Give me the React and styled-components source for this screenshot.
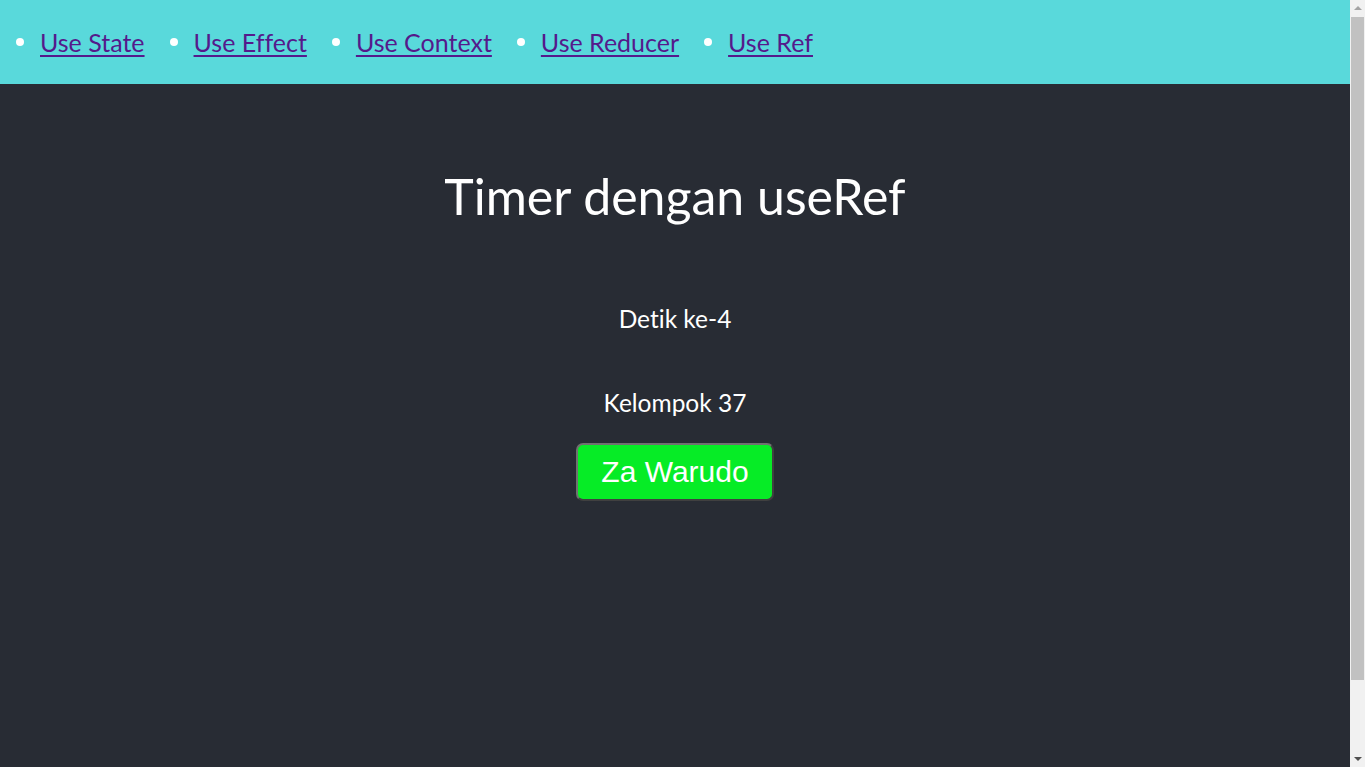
import React from "react";
import styled, { createGlobalStyle } from "styled-components";

const Global = createGlobalStyle`
  html, body { margin: 0; padding: 0; }
  body {
    font-family: Lato, "Noto Sans", sans-serif;
    font-variant-ligatures: none;
    background: #282c34;
  }
`;

const Page = styled.div`
  margin-right: 15px;
`;

const Nav = styled.nav`
  background: #59d9db;
  height: 84px;
  display: flex;
  align-items: center;
`;

const NavList = styled.ul`
  list-style: none;
  margin: 0;
  padding: 0 0 0 16px;
  display: flex;
  align-items: center;
  gap: 25px;
`;

const NavItem = styled.li`
  display: flex;
  align-items: center;
  gap: 16px;
  font-size: 25px;
  &::before {
    content: "";
    width: 8px;
    height: 8px;
    border-radius: 50%;
    background: #ffffff;
  }
`;

const NavLink = styled.a`
  color: #551a8b;
  text-decoration: underline;
  text-underline-offset: 3px;
  text-decoration-thickness: 2px;
`;

const Main = styled.main`
  min-height: 100vh;
  background: #282c34;
  color: #ffffff;
  display: flex;
  flex-direction: column;
  align-items: center;
  box-sizing: border-box;
  padding-top: 78px;
`;

const Title = styled.h1`
  margin: 0;
  font-weight: 400;
  font-size: 50px;
  line-height: 68px;
`;

const Text = styled.p`
  margin: ${(p) => p.$top}px 0 0;
  font-size: 24.5px;
  line-height: 32px;
`;

const Button = styled.button`
  margin-top: 24px;
  width: 198px;
  height: 58px;
  background: #06ec26;
  color: #ffffff;
  font-family: "Liberation Sans", Arial, sans-serif;
  font-size: 30px;
  border: 2px solid #707070;
  border-right-color: #404040;
  border-bottom-color: #404040;
  border-radius: 7px;
  cursor: pointer;
`;

const ScrollBar = styled.div`
  position: fixed;
  top: 0;
  right: 0;
  width: 15px;
  height: 100vh;
  background: #f1f1f1;
  display: flex;
  flex-direction: column;
  align-items: center;
`;

const Arrow = styled.div`
  height: 17px;
  width: 15px;
  display: flex;
  align-items: center;
  justify-content: center;
  flex: none;
  margin-top: ${(p) => (p.$down ? "auto" : "0")};
  &::before {
    content: "";
    width: 0;
    height: 0;
    border-left: 4px solid transparent;
    border-right: 4px solid transparent;
    ${(p) =>
      p.$down
        ? "border-top: 4px solid #505050; margin-top: 1px;"
        : "border-bottom: 4px solid #a3a3a3; margin-top: -1px;"}
  }
`;

const Thumb = styled.div`
  width: 13px;
  height: 663px;
  background: #c1c1c1;
  flex: none;
`;

const links = ["Use State", "Use Effect", "Use Context", "Use Reducer", "Use Ref"];

export default function App() {
  return (
    <>
      <Global />
      <Page>
        <Nav>
          <NavList>
            {links.map((l) => (
              <NavItem key={l}>
                <NavLink href="#">{l}</NavLink>
              </NavItem>
            ))}
          </NavList>
        </Nav>
        <Main>
          <Title>Timer dengan useRef</Title>
          <Text $top={73}>Detik ke-4</Text>
          <Text $top={52}>Kelompok 37</Text>
          <Button>Za Warudo</Button>
        </Main>
      </Page>
      <ScrollBar>
        <Arrow />
        <Thumb />
        <Arrow $down />
      </ScrollBar>
    </>
  );
}
